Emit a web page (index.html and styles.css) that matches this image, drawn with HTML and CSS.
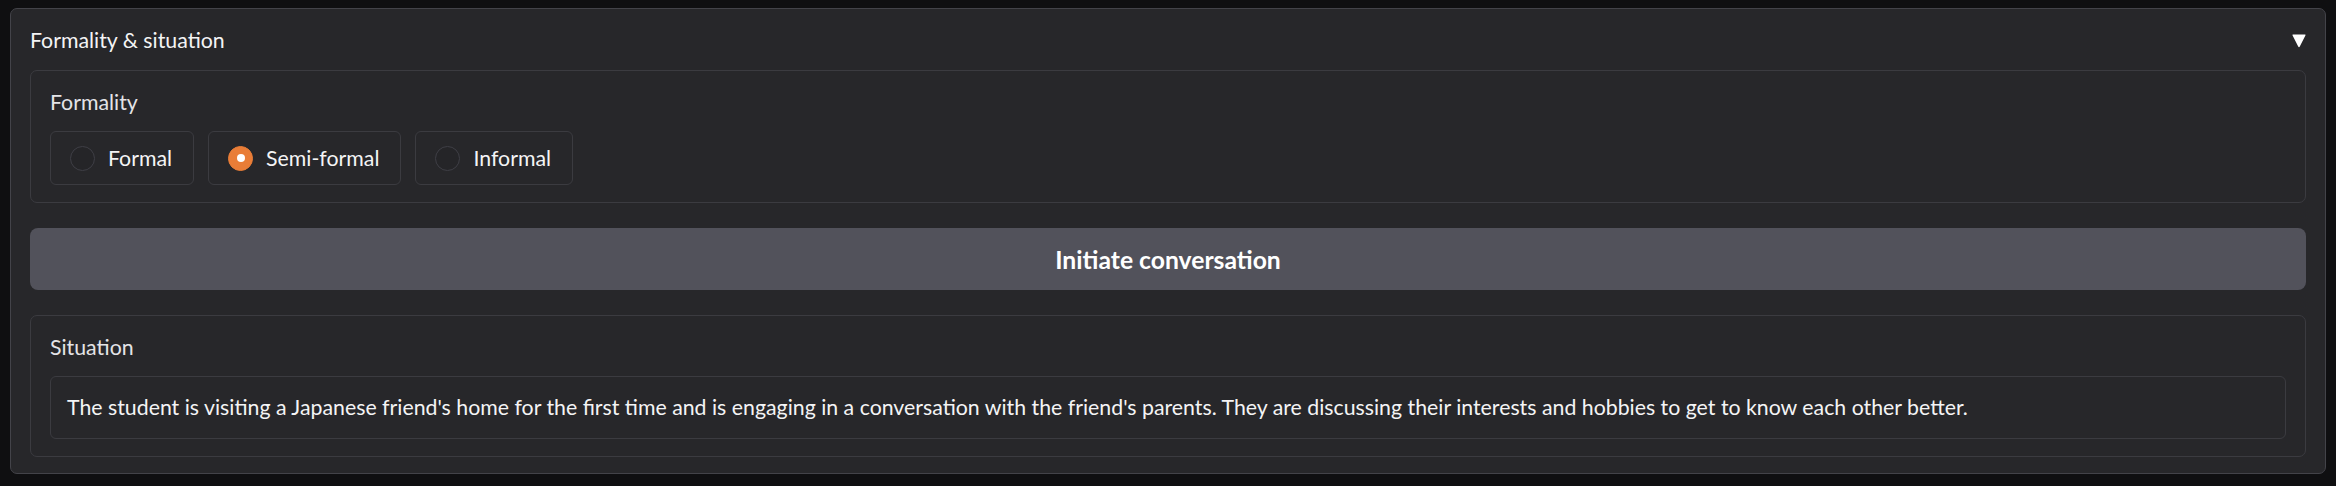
FILE: index.html
```html
<!DOCTYPE html>
<html lang="en">
<head>
<meta charset="utf-8">
<title>Formality & situation</title>
<link rel="stylesheet" href="styles.css">
</head>
<body>
<div class="page">
  <div class="accordion">
    <div class="acc-head">
      <span class="acc-title">Formality &amp; situation</span>
      <svg class="caret" width="14" height="15" viewBox="0 0 14 15"><path d="M1 1.5 L13 1.5 Q14 1.5 13.4 2.6 L7.8 13.6 Q7 14.8 6.2 13.6 L0.6 2.6 Q0 1.5 1 1.5 Z" fill="#ffffff"/></svg>
    </div>
    <div class="acc-body">
      <div class="block">
        <div class="label">Formality</div>
        <div class="radio-group">
          <label class="radio-item"><span class="radio"></span><span class="radio-text">Formal</span></label>
          <label class="radio-item"><span class="radio checked"></span><span class="radio-text">Semi-formal</span></label>
          <label class="radio-item"><span class="radio"></span><span class="radio-text">Informal</span></label>
        </div>
      </div>
      <button class="btn">Initiate conversation</button>
      <div class="block">
        <div class="label">Situation</div>
        <div class="textbox">The student is visiting a Japanese friend's home for the first time and is engaging in a conversation with the friend's parents. They are discussing their interests and hobbies to get to know each other better.</div>
      </div>
    </div>
  </div>
</div>
</body>
</html>
```
FILE: styles.css
```css
* { box-sizing: border-box; }
html, body { margin: 0; padding: 0; }
body {
  background: #0f0f11;
  font-family: Lato, "Noto Sans", sans-serif;
  color: #f4f4f5;
  font-size: 21.3px;
}
.page {
  padding: 8px 10px 12px 10px;
}
.accordion {
  background: #27272a;
  border: 1px solid #434349;
  border-radius: 7px;
  padding: 19px 19px 16px 19px;
}
.acc-head {
  display: flex;
  justify-content: space-between;
  align-items: center;
  height: 24px;
  line-height: 24px;
  margin-bottom: 18px;
}
.acc-title {
  font-size: 21.3px;
  color: #f4f4f5;
}
.caret { display: block; }
.acc-body {
  display: flex;
  flex-direction: column;
  gap: 25px;
}
.block {
  border: 1px solid #3b3b40;
  border-radius: 7px;
  padding: 19px 19px 17px 19px;
}
.label {
  line-height: 24px;
  height: 24px;
  font-size: 21.3px;
  color: #e4e4e7;
  margin-bottom: 17px;
}
.radio-group {
  display: flex;
  gap: 14px;
}
.radio-item {
  display: flex;
  align-items: center;
  gap: 13px;
  height: 54px;
  padding: 0 21px 0 19px;
  border: 1px solid #3b3b40;
  border-radius: 6px;
  line-height: 24px;
}
.radio {
  width: 25px;
  height: 25px;
  border-radius: 50%;
  border: 1px solid #3f3f46;
  background: #252528;
  display: flex;
  align-items: center;
  justify-content: center;
}
.radio.checked {
  background: #e97d37;
  border-color: #e97d37;
}
.radio.checked::after {
  content: "";
  width: 8px;
  height: 8px;
  border-radius: 50%;
  background: #ffffff;
}
.radio-text {
  font-size: 21.3px;
  color: #f4f4f5;
}
.btn {
  height: 62px;
  border: none;
  border-radius: 8px;
  background: #52525b;
  color: #ffffff;
  font-family: Lato, "Noto Sans", sans-serif;
  font-weight: 700;
  font-size: 24.7px;
  padding: 0;
}
.textbox {
  height: 63px;
  display: flex;
  align-items: center;
  padding: 0 16px;
  border: 1px solid #3b3b40;
  border-radius: 6px;
  font-size: 21.3px;
  line-height: 25px;
  color: #f4f4f5;
}
```
